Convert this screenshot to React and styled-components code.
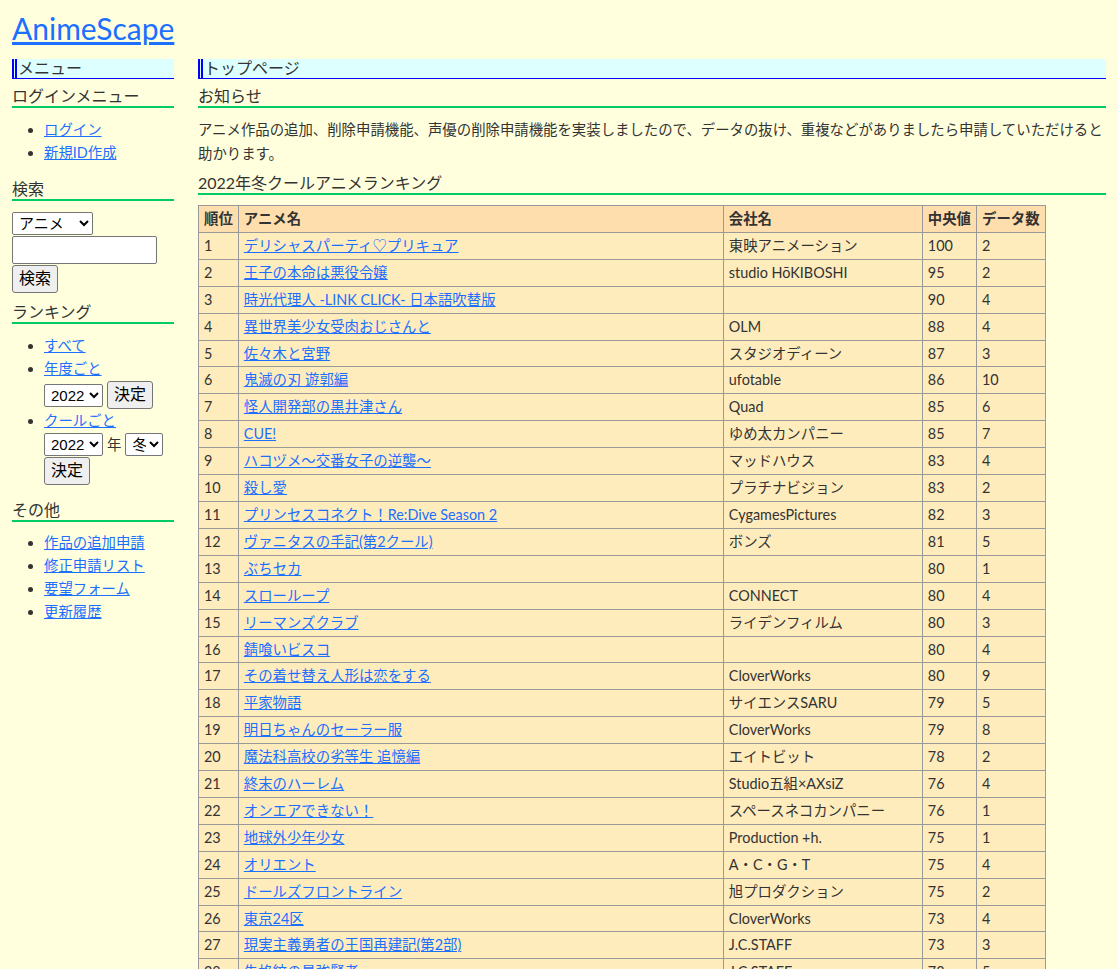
import React from "react";
import styled, { createGlobalStyle } from "styled-components";

const ranking = [
  ["デリシャスパーティ♡プリキュア", "東映アニメーション", 100, 2],
  ["王子の本命は悪役令嬢", "studio HōKIBOSHI", 95, 2],
  ["時光代理人 -LINK CLICK- 日本語吹替版", "", 90, 4],
  ["異世界美少女受肉おじさんと", "OLM", 88, 4],
  ["佐々木と宮野", "スタジオディーン", 87, 3],
  ["鬼滅の刃 遊郭編", "ufotable", 86, 10],
  ["怪人開発部の黒井津さん", "Quad", 85, 6],
  ["CUE!", "ゆめ太カンパニー", 85, 7],
  ["ハコヅメ～交番女子の逆襲～", "マッドハウス", 83, 4],
  ["殺し愛", "プラチナビジョン", 83, 2],
  ["プリンセスコネクト！Re:Dive Season 2", "CygamesPictures", 82, 3],
  ["ヴァニタスの手記(第2クール)", "ボンズ", 81, 5],
  ["ぶちセカ", "", 80, 1],
  ["スローループ", "CONNECT", 80, 4],
  ["リーマンズクラブ", "ライデンフィルム", 80, 3],
  ["錆喰いビスコ", "", 80, 4],
  ["その着せ替え人形は恋をする", "CloverWorks", 80, 9],
  ["平家物語", "サイエンスSARU", 79, 5],
  ["明日ちゃんのセーラー服", "CloverWorks", 79, 8],
  ["魔法科高校の劣等生 追憶編", "エイトビット", 78, 2],
  ["終末のハーレム", "Studio五組×AXsiZ", 76, 4],
  ["オンエアできない！", "スペースネコカンパニー", 76, 1],
  ["地球外少年少女", "Production +h.", 75, 1],
  ["オリエント", "A・C・G・T", 75, 4],
  ["ドールズフロントライン", "旭プロダクション", 75, 2],
  ["東京24区", "CloverWorks", 73, 4],
  ["現実主義勇者の王国再建記(第2部)", "J.C.STAFF", 73, 3],
  ["失格紋の最強賢者", "J.C.STAFF", 73, 5],
];

const App = () => (
  <Page>
    <GlobalStyle />
    <SiteTitle>
      <Link href="#">AnimeScape</Link>
    </SiteTitle>
    <Layout>
      <Side>
        <BoxHeader>メニュー</BoxHeader>
        <SubHeading gap={7}>ログインメニュー</SubHeading>
        <MenuList>
          <li><Link href="#">ログイン</Link></li>
          <li><Link href="#">新規ID作成</Link></li>
        </MenuList>
        <SubHeading gap={15}>検索</SubHeading>
        <SearchForm>
          <Select w={81} defaultValue="anime">
            <option value="anime">アニメ</option>
            <option value="seiyu">声優</option>
          </Select>
          <TextInput type="text" />
          <Button>検索</Button>
        </SearchForm>
        <SubHeading gap={9}>ランキング</SubHeading>
        <MenuList>
          <li><Link href="#">すべて</Link></li>
          <li>
            <Link href="#">年度ごと</Link>
            <Controls>
              <Select w={59} defaultValue="2022">
                <option>2022</option>
              </Select>
              <Button>決定</Button>
            </Controls>
          </li>
          <li>
            <Link href="#">クールごと</Link>
            <Controls>
              <Select w={59} defaultValue="2022">
                <option>2022</option>
              </Select>
              <span>年</span>
              <Select w={38} defaultValue="冬">
                <option>冬</option>
              </Select>
              <Button>決定</Button>
            </Controls>
          </li>
        </MenuList>
        <SubHeading gap={15}>その他</SubHeading>
        <MenuList gap={9}>
          <li><Link href="#">作品の追加申請</Link></li>
          <li><Link href="#">修正申請リスト</Link></li>
          <li><Link href="#">要望フォーム</Link></li>
          <li><Link href="#">更新履歴</Link></li>
        </MenuList>
      </Side>

      <Main>
        <BoxHeader>トップページ</BoxHeader>
        <SubHeading gap={7}>お知らせ</SubHeading>
        <Notice>
          アニメ作品の追加、削除申請機能、声優の削除申請機能を実装しましたので、データの抜け、重複などがありましたら申請していただけると助かります。
        </Notice>
        <SubHeading gap={7}>2022年冬クールアニメランキング</SubHeading>
        <RankTable>
          <thead>
            <tr>
              <HeadCell>順位</HeadCell>
              <HeadCell w={474}>アニメ名</HeadCell>
              <HeadCell w={188}>会社名</HeadCell>
              <HeadCell>中央値</HeadCell>
              <HeadCell>データ数</HeadCell>
            </tr>
          </thead>
          <tbody>
            {ranking.map(([title, studio, median, count], i) => (
              <tr key={title}>
                <Cell>{i + 1}</Cell>
                <Cell><Link href="#">{title}</Link></Cell>
                <Cell>{studio}</Cell>
                <Cell>{median}</Cell>
                <Cell>{count}</Cell>
              </tr>
            ))}
          </tbody>
        </RankTable>
      </Main>
    </Layout>
  </Page>
);

const GlobalStyle = createGlobalStyle`
  body {
    margin: 0;
    background: #ffffdd;
    color: #333;
    font-family: Lato, "Noto Sans CJK JP", sans-serif;
    font-size: 14.4px;
  }
`;

const Page = styled.div`
  padding: 0 12px;
`;

const Link = styled.a`
  color: #1c6fff;
  text-decoration: underline;
`;

const SiteTitle = styled.h1`
  margin: 0;
  padding-top: 8px;
  font-size: 30px;
  font-weight: 400;
  line-height: 40px;
`;

const Layout = styled.div`
  display: grid;
  grid-template-columns: 162px 908px;
  column-gap: 24px;
  align-items: start;
`;

const Side = styled.nav``;

const Main = styled.main``;

const BoxHeader = styled.h2`
  margin: 11px 0 0;
  padding: 0 0 2px 1px;
  height: 17px;
  line-height: 17px;
  font-size: 16px;
  font-weight: 400;
  background: #ddffff;
  border-left: 5px double #0000ff;
  border-bottom: 1px solid #0000ff;
`;

const SubHeading = styled.h3`
  margin: ${(p) => p.gap}px 0 0;
  font-size: 16px;
  font-weight: 400;
  line-height: 20px;
  border-bottom: 2px solid #00cc66;
`;

const MenuList = styled.ul`
  margin: ${(p) => p.gap ?? 10}px 0 0;
  padding-left: 32px;
  line-height: 23px;
`;

const SearchForm = styled.form`
  margin-top: 11px;
  display: flex;
  flex-direction: column;
  align-items: flex-start;
  gap: 1px;
`;

const Controls = styled.div`
  display: flex;
  flex-wrap: wrap;
  align-items: center;
  column-gap: 4px;
  row-gap: 1px;
  margin-top: 1px;
  line-height: 20px;
`;

const Select = styled.select`
  box-sizing: border-box;
  width: ${(p) => p.w}px;
  height: 23px;
  padding: 0 0 0 2px;
  font-family: "Liberation Sans", "Noto Sans CJK JP", sans-serif;
  font-size: 15px;
  color: #000;
  background: #fff;
  border: 1px solid #767676;
  border-radius: 2px;
`;

const TextInput = styled.input`
  box-sizing: border-box;
  width: 145px;
  height: 28px;
  border: 1px solid #767676;
  border-radius: 2px;
  background: #fff;
`;

const Button = styled.button`
  box-sizing: border-box;
  height: 28px;
  padding: 0 6px;
  font-family: "Liberation Sans", "Noto Sans CJK JP", sans-serif;
  font-size: 16px;
  line-height: 18px;
  color: #000;
  background: #efefef;
  border: 1px solid #767676;
  border-radius: 3px;
`;

const Notice = styled.p`
  margin: 10px 0 0;
  line-height: 24px;
`;

const RankTable = styled.table`
  margin-top: 10px;
  border-collapse: collapse;
  line-height: 19.9px;
`;

const HeadCell = styled.th`
  width: ${(p) => (p.w ? `${p.w}px` : "auto")};
  padding: 3px 5px;
  text-align: left;
  font-weight: 700;
  white-space: nowrap;
  background: #ffdead;
  border: 1px solid #999;
`;

const Cell = styled.td`
  padding: 3px 5px;
  white-space: nowrap;
  background: #feecbd;
  border: 1px solid #999;
`;

export default App;
